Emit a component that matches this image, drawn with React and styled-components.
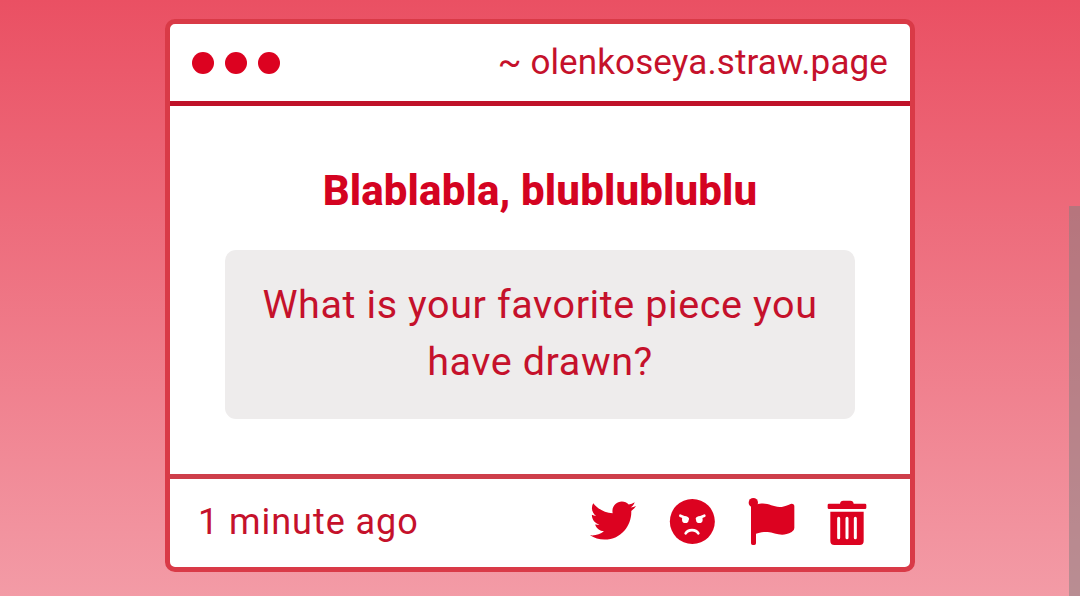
import styled, { createGlobalStyle } from "styled-components";
import { FaTwitter } from "react-icons/fa";

export default function App() {
  return (
    <Page>
      <GlobalStyle />
      <Card>
        <Header>
          <Dots>
            <Dot />
            <Dot />
            <Dot />
          </Dots>
          <Address>~ olenkoseya.straw.page</Address>
        </Header>

        <Content>
          <Title>Blablabla, blublublublu</Title>
          <Question>What is your favorite piece you have drawn?</Question>
        </Content>

        <Footer>
          <Time>1 minute ago</Time>
          <Actions>
            <IconButton aria-label="Share">
              <TwitterIcon preserveAspectRatio="none" />
            </IconButton>
            <IconButton aria-label="Block">
              <AngryIcon />
            </IconButton>
            <IconButton aria-label="Report">
              <FlagIcon />
            </IconButton>
            <IconButton aria-label="Delete">
              <TrashIcon />
            </IconButton>
          </Actions>
        </Footer>
      </Card>
      <ScrollThumb />
    </Page>
  );
}

const AngryIcon = () => (
  <Icon viewBox="0 0 144 144">
    <circle cx="73" cy="70.5" r="67.5" fill="currentColor" />
    <g stroke="#fff" strokeLinecap="round" fill="none">
      <path d="M37 53 L59 62 M109 53 L87 62" strokeWidth="8" />
      <path d="M53 106 C60 93 84 93 91 106" strokeWidth="8" />
    </g>
    <circle cx="52" cy="65" r="10" fill="#fff" />
    <circle cx="94" cy="65" r="10" fill="#fff" />
  </Icon>
);

const FlagIcon = () => (
  <Icon viewBox="0 0 144 144" fill="currentColor">
    <circle cx="19" cy="14" r="14" />
    <path d="M12 14 H27 V20 C62 10 72 27 98 27 C116 27 126 18 134 17 Q142 17 142 25 V90 Q142 98 134 102 C104 119 84 104 62 102 C48 101 36 104 27 107 V136 Q27 141 22 141 H17 Q12 141 12 136 Z" />
  </Icon>
);

const TrashIcon = () => (
  <Icon viewBox="0 0 144 144" fill="currentColor">
    <path d="M42 17 Q43 8 52 8 H73 Q82 8 83 17 H117 Q121 17 121 21 V29 Q121 33 117 33 H9 Q5 33 5 29 V21 Q5 17 9 17 Z" />
    <path d="M13 41 H113 V129 Q113 141 101 141 H25 Q13 141 13 129 Z" />
    <path
      d="M38 61 V119 M63 61 V119 M88 61 V119"
      stroke="#fff"
      strokeWidth="9"
      strokeLinecap="round"
    />
  </Icon>
);

const GlobalStyle = createGlobalStyle`
  * {
    box-sizing: border-box;
  }

  body {
    margin: 0;
    font-family: Roboto, "Liberation Sans", sans-serif;
    color: #c5112b;
  }
`;

const Page = styled.div`
  position: relative;
  height: 596px;
  padding-top: 19px;
  overflow: hidden;
  background: linear-gradient(#ea5063, #f39ba6);
`;

const Card = styled.main`
  display: flex;
  flex-direction: column;
  width: 750px;
  height: 553px;
  margin: 0 auto;
  background: #fff;
  border: 5px solid #d93a47;
  border-radius: 10px;
`;

const Header = styled.header`
  display: flex;
  justify-content: space-between;
  align-items: center;
  height: 82px;
  padding: 0 22px;
  border-bottom: 5px solid #bf1229;
`;

const Dots = styled.div`
  display: flex;
  gap: 11px;
`;

const Dot = styled.span`
  width: 22px;
  height: 22px;
  border-radius: 50%;
  background: #dc0220;
`;

const Address = styled.span`
  font-size: 35px;
  line-height: 42px;
  letter-spacing: 0.12px;
`;

const Content = styled.section`
  flex: 1;
  padding: 60px 55px 0;
  text-align: center;
`;

const Title = styled.h1`
  margin: 0;
  font-size: 42px;
  line-height: 50px;
  font-weight: 800;
  letter-spacing: 0.15px;
  color: #d40321;
`;

const Question = styled.p`
  height: 169px;
  margin: 34px 0 0;
  padding: 26px 30px;
  border-radius: 11px;
  background: #eeecec;
  font-size: 39.5px;
  line-height: 57px;
  letter-spacing: 0.6px;
`;

const Footer = styled.footer`
  display: flex;
  justify-content: space-between;
  align-items: center;
  height: 93px;
  padding: 0 36px 2px 28px;
  border-top: 5px solid #ce3e4a;
`;

const Time = styled.span`
  font-size: 36px;
  line-height: 44px;
  letter-spacing: 0.95px;
`;

const Actions = styled.div`
  display: flex;
  gap: 31px;
`;

const IconButton = styled.button`
  display: flex;
  justify-content: center;
  align-items: center;
  width: 48px;
  height: 48px;
  padding: 0;
  border: none;
  background: none;
  color: #dc0220;
  cursor: pointer;
`;

const Icon = styled.svg`
  width: 48px;
  height: 48px;
`;

const TwitterIcon = styled(FaTwitter)`
  width: 46px;
  height: 47px;
  margin-bottom: 4px;
`;

const ScrollThumb = styled.div`
  position: absolute;
  top: 206px;
  right: 0;
  bottom: 0;
  width: 11px;
  background: rgba(128, 128, 128, 0.5);
`;
